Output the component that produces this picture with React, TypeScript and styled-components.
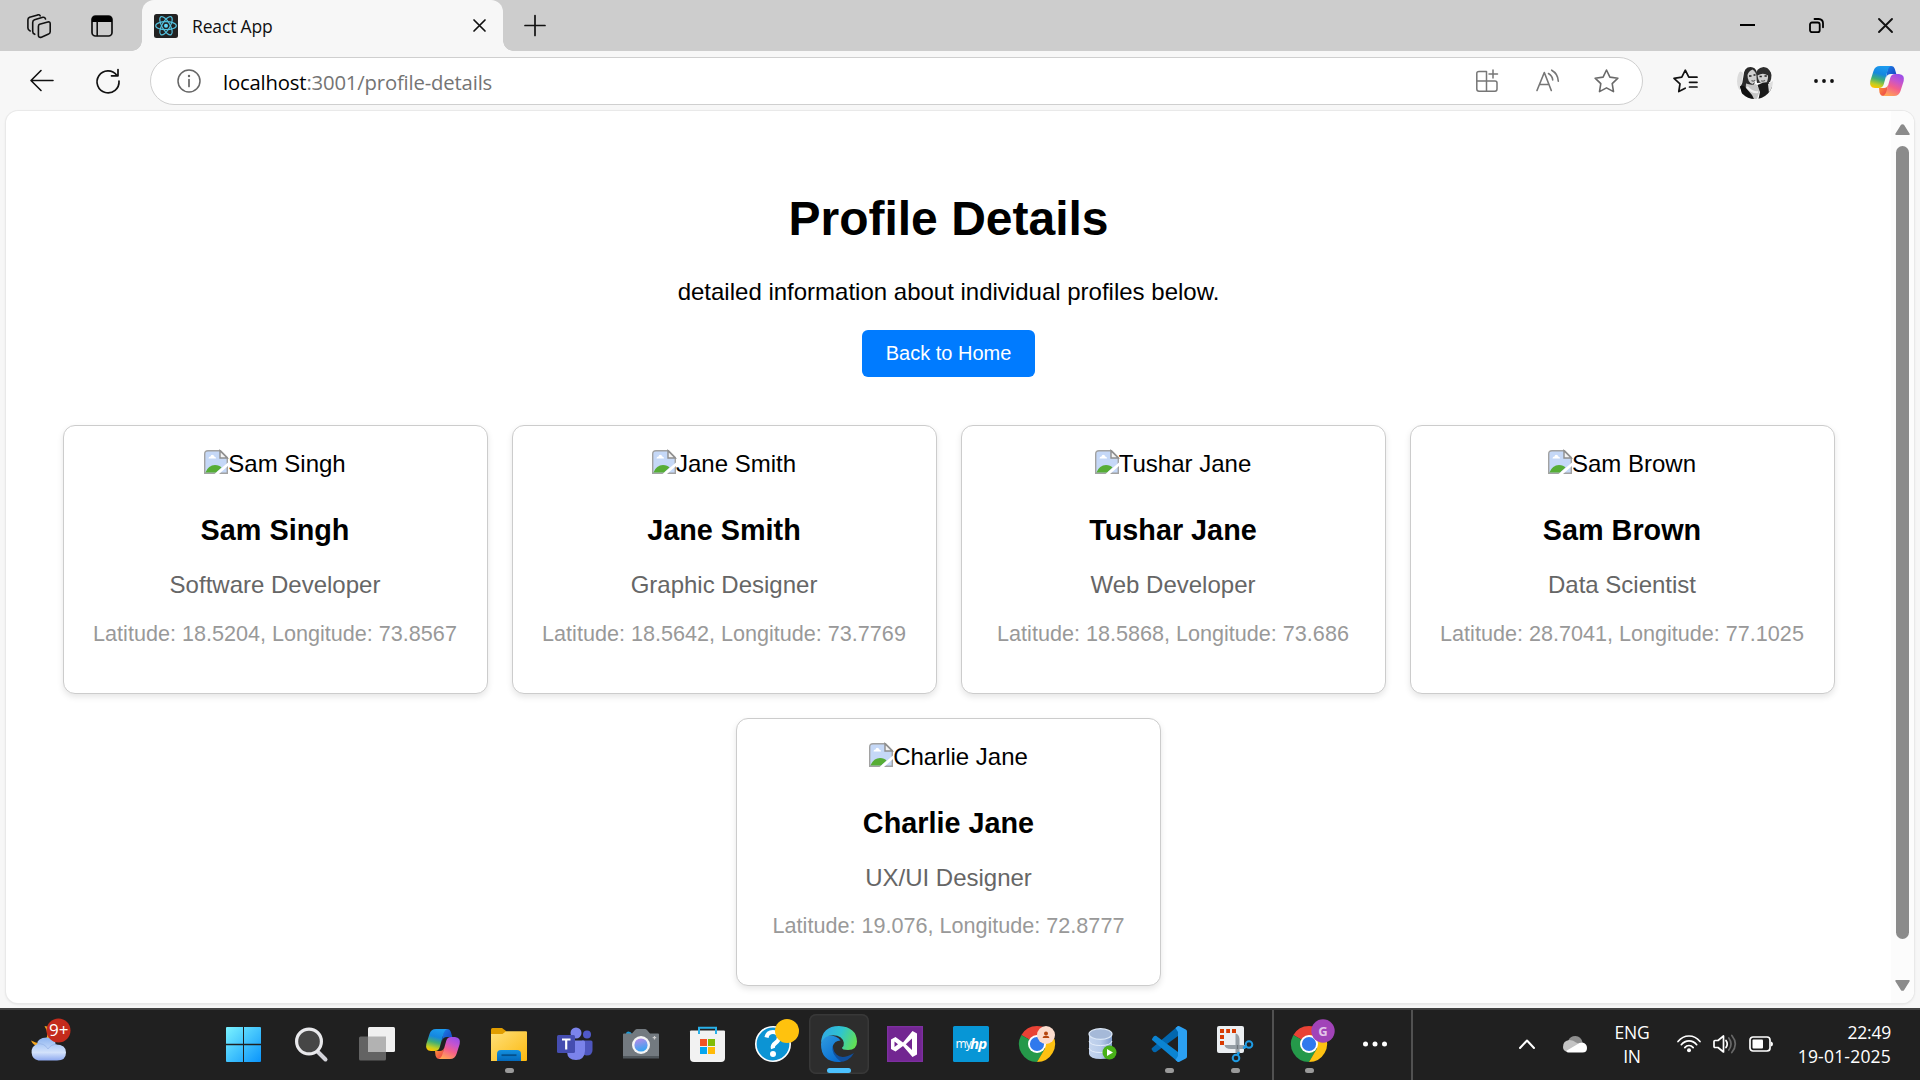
import React from "react";
import styled, { createGlobalStyle, css } from "styled-components";

const uiFont = `"Open Sans", "Noto Sans", sans-serif`;
const pageFont = `"Liberation Sans", Arial, sans-serif`;

const GlobalStyle = createGlobalStyle`
  *, *::before, *::after { box-sizing: border-box; }
  html, body { margin: 0; padding: 0; background: #f7f7f7; }
  body { overflow: hidden; }
  svg { display: block; flex: none; overflow: visible; }
`;

const Desktop = styled.div`
  width: 1920px;
  height: 1080px;
  display: flex;
  flex-direction: column;
  overflow: hidden;
  background: #f7f7f7;
`;

/* ---------- browser chrome ---------- */

const TabStrip = styled.header`
  height: 51px;
  flex: none;
  display: flex;
  align-items: center;
  background: #cdcdcd;
`;

const Slot = styled.span<{ $w: number; $h?: number; $ml?: number }>`
  flex: none;
  display: flex;
  align-items: center;
  justify-content: center;
  width: ${(p) => p.$w}px;
  height: ${(p) => p.$h ?? p.$w}px;
  margin-left: ${(p) => p.$ml ?? 0}px;
`;

const Tab = styled.div`
  position: relative;
  height: 51px;
  width: 361px;
  margin-left: 29px;
  padding-left: 12px;
  display: flex;
  align-items: center;
  background: #f7f7f7;
  border-radius: 12px 12px 0 0;

  &::before,
  &::after {
    content: "";
    position: absolute;
    bottom: 0;
    width: 10px;
    height: 10px;
  }
  &::before {
    left: -10px;
    background: radial-gradient(circle at 0 0, transparent 9.5px, #f7f7f7 10px);
  }
  &::after {
    right: -10px;
    background: radial-gradient(circle at 100% 0, transparent 9.5px, #f7f7f7 10px);
  }
`;

const TabTitle = styled.span`
  width: 281px;
  margin-left: 14px;
  font: 400 17.5px/24px ${uiFont};
  letter-spacing: -0.15px;
  color: #111;
`;

const WindowControls = styled.div`
  margin-left: auto;
  margin-right: 27px;
  display: flex;
  gap: 54px;
  align-items: center;
`;

const Toolbar = styled.nav`
  height: 60px;
  flex: none;
  display: flex;
  align-items: center;
  padding: 0 15px 0 30px;
`;

const AddressBar = styled.div`
  width: 1493px;
  height: 48px;
  margin-left: 30px;
  padding: 0 23px 0 26px;
  display: flex;
  align-items: center;
  background: #fff;
  border: 1.5px solid #cfcfcf;
  border-radius: 24px;
`;

const Url = styled.span`
  margin-left: 22px;
  margin-right: auto;
  padding-top: 1px;
  font: 400 20.3px/28px ${uiFont};
  letter-spacing: -0.17px;
  color: #747474;
  white-space: nowrap;
`;

const Host = styled.span`
  color: #000;
`;

/* ---------- page ---------- */

const Viewport = styled.div`
  height: 891.5px;
  flex: none;
  margin: 0 6px;
  display: flex;
  background: #fff;
  border-radius: 12px;
  box-shadow: 0 0 0 1px #e9e9e9, 0 1px 3px rgba(0, 0, 0, 0.12);
  overflow: hidden;
`;

const Page = styled.main`
  flex: 1;
  padding-top: 79px;
  display: flex;
  flex-direction: column;
  align-items: center;
  font-family: ${pageFont};
  color: #000;
`;

const Heading = styled.h1`
  margin: 0;
  padding-top: 1px;
  font-size: 48px;
  line-height: 55px;
  font-weight: 700;
`;

const Subtitle = styled.p`
  margin: 32px 0 0;
  font-size: 24px;
  line-height: 28px;
`;

const HomeButton = styled.button`
  margin: 24px 0 0;
  width: 173px;
  height: 47px;
  padding: 0;
  border: 0;
  border-radius: 6px;
  background: #007bff;
  color: #fff;
  font: 400 20px/23px ${pageFont};
`;

const CardList = styled.section`
  margin-top: 48px;
  width: 1800px;
  display: flex;
  flex-wrap: wrap;
  justify-content: center;
  gap: 24px;
`;

const Card = styled.article`
  width: 425px;
  height: 268.5px;
  padding-top: 24px;
  display: flex;
  flex-direction: column;
  align-items: center;
  border: 1px solid #ccc;
  border-radius: 12px;
  background: #fff;
  box-shadow: 0 3px 6px rgba(0, 0, 0, 0.1);
`;

const Photo = styled.div`
  height: 28px;
  display: flex;
  align-items: flex-start;
  font-size: 24px;
  line-height: 28px;
`;

const Name = styled.h3`
  margin: 36px 0 0;
  font-size: 28.8px;
  line-height: 32px;
`;

const Role = styled.p`
  margin: 25px 0 0;
  font-size: 24px;
  line-height: 28px;
  color: #666;
`;

const Coordinates = styled.p`
  margin: 22.5px 0 0;
  font-size: 21.6px;
  line-height: 24px;
  color: #999;
`;

const Scrollbar = styled.aside`
  width: 23px;
  padding: 12.5px 0 12px;
  display: flex;
  flex-direction: column;
  align-items: center;
  background: #fcfcfc;
`;

const Thumb = styled.div`
  width: 13px;
  height: 793px;
  margin: 11.5px 0 40.5px;
  border-radius: 7px;
  background: #8b8b8b;
`;

/* ---------- taskbar ---------- */

const Taskbar = styled.footer`
  height: 72px;
  margin-top: auto;
  flex: none;
  display: flex;
  background: #202020;
  border-top: 2px solid #414141;
`;

const Weather = styled.div`
  width: 210px;
  padding: 8px 0 0 30px;
`;

const TaskCell = styled.div<{ $active?: boolean; $running?: boolean }>`
  position: relative;
  width: 60px;
  height: 60px;
  margin: 4px 3px 0;
  flex: none;
  display: flex;
  align-items: center;
  justify-content: center;
  border-radius: 7px;
  ${(p) =>
    p.$active &&
    css`
      background: #2d2d2d;
      box-shadow: inset 0 0 0 1.5px #383838;
    `}
  ${(p) =>
    (p.$active || p.$running) &&
    css`
      &::after {
        content: "";
        position: absolute;
        bottom: 1px;
        width: ${p.$active ? 24 : 9}px;
        height: 5px;
        border-radius: 3px;
        background: ${p.$active ? "#4cc2ff" : "#9a9a9a"};
      }
    `}
`;

const TaskList = styled.div<{ $ml?: number }>`
  display: flex;
  flex: none;
  margin-left: ${(p) => p.$ml ?? 0}px;
`;

const Divider = styled.div<{ $ml: number }>`
  width: 2px;
  flex: none;
  margin-left: ${(p) => p.$ml}px;
  background: #515151;
`;

const Tray = styled.div`
  height: 68px;
  margin-left: auto;
  padding-right: 29px;
  display: flex;
  align-items: center;
`;

const TrayText = styled.div<{ $align: string; $w: number; $ml: number }>`
  width: ${(p) => p.$w}px;
  margin-left: ${(p) => p.$ml}px;
  text-align: ${(p) => p.$align};
  font: 400 17.5px/24px ${uiFont};
  letter-spacing: -0.2px;
  white-space: nowrap;
  color: #fff;
`;

const DateLine = styled.span`
  letter-spacing: 0.2px;
`;

/* ---------- chrome icons ---------- */

const line = {
  fill: "none",
  stroke: "#111",
  strokeWidth: 1.6,
  strokeLinecap: "round" as const,
  strokeLinejoin: "round" as const,
};

const WorkspacesIcon = () => (
  <svg width="24" height="24" viewBox="0 0 24 24" {...line} strokeWidth={1.6}>
    <path d="M12.600 10.200 20.800 8q2.400-.5 2.400 1.800v8q0 1.500-1.600 2.300l-7.200 3.100q-2.800.8-3-1.800v-9q0-1.800 1.200-2.200Z" />
    <path d="M7.800 20.300Q5.700 19.500 5.700 17.500V8.400q0-2 1.800-2.600L15.800 3.300q2-.5 2.700 1.600" />
    <path d="M3.200 17Q.9 16 .9 14V5.700Q.9 4 2.600 3.300L10.700.9q1.800-.4 2.500.9" />
  </svg>
);

const TabActionsIcon = () => (
  <svg width="22" height="22" viewBox="0 0 22 22">
    <rect x="1" y="1" width="20" height="20" rx="3.500" {...line} strokeWidth={1.700} />
    <path d="M1 7V4.500Q1 1 4.500 1h13Q21 1 21 4.500V7Z" fill="#000" />
    <path d="M6.200 7v13.500" {...line} />
  </svg>
);

const ReactIcon = () => (
  <svg width="24" height="24" viewBox="0 0 24 24">
    <rect width="24" height="24" rx="2.500" fill="#222" />
    <g fill="none" stroke="#53c1de" strokeWidth="1.200">
      <ellipse cx="12" cy="11.700" rx="10.300" ry="4" />
      <ellipse cx="12" cy="11.700" rx="10.300" ry="4" transform="rotate(60 12 11.700)" />
      <ellipse cx="12" cy="11.700" rx="10.300" ry="4" transform="rotate(120 12 11.700)" />
    </g>
    <circle cx="12" cy="11.700" r="2" fill="#61dafb" />
  </svg>
);

const CrossIcon = ({ size, w = 1.8 }: { size: number; w?: number }) => (
  <svg width={size} height={size} viewBox={`0 0 ${size} ${size}`} {...line} strokeWidth={w}>
    <path d={`M1 1 ${size - 1} ${size - 1}M${size - 1} 1 1 ${size - 1}`} />
  </svg>
);

const PlusIcon = () => (
  <svg width="22" height="22" viewBox="0 0 22 22" {...line} strokeWidth={1.700}>
    <path d="M11 .5v20M1 10.500h20" />
  </svg>
);

const MinimizeIcon = () => (
  <svg width="15" height="15" viewBox="0 0 15 15">
    <path d="M0 7h15" stroke="#000" strokeWidth="2" />
  </svg>
);

const RestoreIcon = () => (
  <svg width="15" height="15" viewBox="0 0 15 15" {...line} stroke="#000" strokeWidth={1.800}>
    <rect x="1" y="4.500" width="9.700" height="9.700" rx="2" />
    <path d="M5.500 1h4.200q4.300.2 4.300 4.300v4" />
  </svg>
);

const BackIcon = () => (
  <svg width="24" height="22" viewBox="0 0 24 22" {...line}>
    <path d="M23 10.500H1.200M11 .5 1 10.500l10 10" />
  </svg>
);

const RefreshIcon = () => (
  <svg width="24" height="24" viewBox="0 0 24 24" {...line} strokeWidth={1.700}>
    <path d="M20.800 6.200A11 11 0 1 0 23 12M22 .5v6.300h-6.500" />
  </svg>
);

const InfoIcon = () => (
  <svg width="24" height="24" viewBox="0 0 24 24">
    <circle cx="12" cy="12" r="11" {...line} stroke="#666" strokeWidth={1.500} />
    <path d="M12 10.500v7" stroke="#666" strokeWidth="1.700" strokeLinecap="round" />
    <circle cx="12" cy="7" r="1.200" fill="#666" />
  </svg>
);

const AppsIcon = () => (
  <svg width="22" height="22" viewBox="0 0 22 22" {...line} stroke="#767676" strokeWidth={1.500}>
    <path d="M10.500 11V1.500H3Q.8 1.500.8 3.500V19q0 2.200 2.200 2.200h16q2 0 2-2.200v-6q0-2-2-2H.8M10.500 11v10M17 0v8M13 4h8.500" />
  </svg>
);

const ReadAloudIcon = () => (
  <svg width="24" height="22" viewBox="0 0 24 22" {...line} stroke="#767676" strokeWidth={1.600}>
    <path d="M1 20.500 8.300 2.500l7 18M3.500 14.500h9.500" />
    <path d="M12.500 3.500q4 2.500 4.200 6.500M15.700.2q6.300 3.500 6.600 11" />
  </svg>
);

const StarIcon = () => (
  <svg width="25" height="24" viewBox="0 0 25 24" {...line} stroke="#6a6a6a" strokeWidth={1.600}>
    <path d="M12.500 1 15.900 8.100 23.900 9.200 18.200 14.700 19.500 22.600 12.500 18.900 5.500 22.600 6.800 14.700 1.100 9.200 9.100 8.100Z" />
  </svg>
);

const FavoritesIcon = () => (
  <svg width="25" height="24" viewBox="0 0 25 24" {...line} strokeWidth={1.700}>
    <path d="M12.200 19.200 5.800 22.500 7 14.800 1 9.400 8.800 8.200 12.300 1.200 15.800 8.200H24M16.500 13.300H24M16.500 18H24" />
  </svg>
);

const MoreIcon = ({ color, gap, r }: { color: string; gap: number; r: number }) => (
  <svg width="26" height="6" viewBox="0 0 26 6" fill={color}>
    <circle cx={13 - gap} cy="3" r={r} />
    <circle cx="13" cy="3" r={r} />
    <circle cx={13 + gap} cy="3" r={r} />
  </svg>
);

const AvatarIcon = () => (
  <svg width="36" height="36" viewBox="0 0 36 36">
    <defs>
      <clipPath id="avatarClip">
        <circle cx="18" cy="18" r="18" />
      </clipPath>
    </defs>
    <g clipPath="url(#avatarClip)">
      <rect width="36" height="36" fill="#fafafa" />
      <path d="M0 10q4-3 6 0l-2 16-4 2Z" fill="#dcdcdc" />
      <path d="M3 25Q6 20 6.500 13 7 4 13.500 4q5.500 0 6.500 6l-3 12-6 8Z" fill="#2a2a2a" />
      <path d="M19 13q-.500-8 7.500-9Q34 4.500 34.500 12q0 4-1.500 7l-13 1Z" fill="#2e2e2e" />
      <path d="M10.500 12q1-4 5-5.500 3.500 2 4 6.500 0 6-4 8-5-1.500-5-9Z" fill="#cfcfcf" />
      <path d="M20.500 12.500q5.500-3.500 10.500 0 .500 6.500-3.500 8.500-6 0-7-8.500Z" fill="#d0d0d0" />
      <path d="M9 20.500q5 2 10 .5l4 6-3 9H8Z" fill="#c6c6c6" />
      <path d="M20.500 22q5-3 11-3l4 5-5 12h-9l1.500-7Z" fill="#1b1b1b" />
      <path d="M3 23q4-1 6 2l6 7 2 4H6Z" fill="#111" />
      <path d="m31 21 5-3v9l-4 3Z" fill="#dedede" />
      <path d="M12 13h2.500M16.500 12h2M22.500 13.500h2.300M27.500 13h2.300" stroke="#222" strokeWidth="1.500" />
      <path d="M14.500 17.500q2 1.500 3.500-.5M24 17.800q2 1 4-.6" stroke="#666" strokeWidth="1.200" fill="none" />
      <path d="M10 24q5 6 11 5" stroke="#efefef" strokeWidth="2" fill="none" />
    </g>
  </svg>
);

const CopilotIcon = ({ id }: { id: string }) => (
  <svg width="34" height="30" viewBox="0 0 34 30">
    <defs>
      <linearGradient id={`${id}a`} x1="0.55" y1="0" x2="0.3" y2="1">
        <stop offset="0" stopColor="#1c9bef" />
        <stop offset=".35" stopColor="#1587df" />
        <stop offset=".6" stopColor="#3fae78" />
        <stop offset=".85" stopColor="#c2ce22" />
        <stop offset="1" stopColor="#ffc400" />
      </linearGradient>
      <linearGradient id={`${id}b`} x1="0.75" y1="0" x2="0.3" y2="1">
        <stop offset="0" stopColor="#9b4ee8" />
        <stop offset=".3" stopColor="#c454cf" />
        <stop offset=".6" stopColor="#f45f8b" />
        <stop offset="1" stopColor="#ffa455" />
      </linearGradient>
      <linearGradient id={`${id}c`} x1="0" y1="0" x2="1" y2="1">
        <stop offset="0" stopColor="#1d7fe8" />
        <stop offset="1" stopColor="#1740bd" />
      </linearGradient>
      <linearGradient id={`${id}d`} x1="0" y1="0" x2="1" y2="1">
        <stop offset="0" stopColor="#ff9a35" />
        <stop offset="1" stopColor="#e9384f" />
      </linearGradient>
    </defs>
    <path d="M18 0h3q3 0 4 3.400L26.300 8H21q-4 0-5 4Z" fill={`url(#${id}c)`} />
    <path d="M9 22h5q3 0 4-3l-1.500 11h-3q-3 0-4-3.500Z" fill={`url(#${id}d)`} />
    <path d="M10 0H21q-2.500 1-3.500 5l-3.700 13q-1 4-5 4H5Q-1 21.500.3 15L3.500 5Q5 0 10 0Z" fill={`url(#${id}a)`} />
    <path d="M24 30H12.500q3-1 4-5l3.700-13q1-4 5-4H29q6 .5 4.700 7L30.500 25Q29 30 24 30Z" fill={`url(#${id}b)`} />
  </svg>
);

const BrokenImageIcon = () => (
  <svg width="24" height="24" viewBox="0 0 24 24">
    <path d="M4 .7h12.500l6.800 6.800v15.800H.7V4Q.7.700 4 .7Z" fill="#c5d8f7" stroke="#a2a2a2" strokeWidth="1.400" />
    <path d="M4.500 8.500q0-2 2-2 .5-2.300 2.400-1.500Q10.500 5.500 10.500 6.800q1.700.2 1.500 1.700Z" fill="#fff" />
    <path d="M1.400 22.600q3-7.600 9.600-7.600 4.500 0 6.500 2.500l-5.500 5.100Z" fill="#56ad35" />
    <path d="M16 .7v7.300h7.300Z" fill="#f4f4f4" stroke="#8e8e8e" strokeWidth="1.400" />
    <path d="M24 12.500 10.500 24H15l9-8Z" fill="#fff" />
  </svg>
);

const ArrowIcon = ({ down = false }: { down?: boolean }) => (
  <svg width="15" height="11" viewBox="0 0 15 11">
    <path
      d={down ? "M1 .8h13L8.800 9.200q-1.300 1.800-2.600 0Z" : "M1 10.200h13L8.800 1.800q-1.300-1.800-2.600 0Z"}
      fill="#8b8b8b"
      stroke="#8b8b8b"
      strokeWidth="1.500"
      strokeLinejoin="round"
    />
  </svg>
);

/* ---------- taskbar icons ---------- */

const BadgeText = styled.text`
  font: 400 17px ${uiFont};
  fill: #fff;
  text-anchor: middle;
`;

const InitialText = styled.text<{ $size: number; $color: string }>`
  font: 700 ${(p) => p.$size}px ${uiFont};
  fill: ${(p) => p.$color};
  text-anchor: middle;
`;

const LogoText = styled.text<{ $bold?: boolean }>`
  font: ${(p) => (p.$bold ? "italic 700 15px" : "400 12px")} ${uiFont};
  fill: #fff;
  letter-spacing: -0.8px;
`;

const WeatherIcon = () => (
  <svg width="42" height="44" viewBox="0 0 42 44">
    <defs>
      <linearGradient id="cloud" x1="0" y1="0" x2="0" y2="1">
        <stop offset="0" stopColor="#8db4f0" />
        <stop offset=".65" stopColor="#d3e2fb" />
        <stop offset="1" stopColor="#8faaf0" />
      </linearGradient>
    </defs>
    <path d="M14.500 8q5 8 1 14T1 22.500q2 5 8 6h16V14Q20 8 14.500 8Z" fill="#f2a51f" />
    <path d="M8.500 42.500A8.600 8.600 0 0 1 7.200 26q0-6 9.500-6.500 8 .3 9 7 10.300 0 10.300 8t-9 8Z" fill="url(#cloud)" />
    <path d="M7 26q7-1.500 11 5 3-5 9-4.500" fill="none" stroke="#86a6e2" strokeOpacity=".5" />
    <circle cx="28.500" cy="12.500" r="12" fill="#c42b1c" />
    <BadgeText x="28.800" y="18">9+</BadgeText>
  </svg>
);

const WindowsIcon = () => (
  <svg width="35" height="35" viewBox="0 0 35 35">
    <defs>
      <linearGradient id="win" gradientUnits="userSpaceOnUse" x1="0" y1="0" x2="35" y2="35">
        <stop offset="0" stopColor="#7bf3ff" />
        <stop offset="1" stopColor="#0a94fb" />
      </linearGradient>
    </defs>
    <path d="M1 0h16v16.800H0V1Q0 0 1 0ZM18 0h16q1 0 1 1v15.800H18ZM0 18.200h17V35H1q-1 0-1-1ZM18 18.200h17V34q0 1-1 1H18Z" fill="url(#win)" />
  </svg>
);

const SearchIcon = () => (
  <svg width="33" height="35" viewBox="0 0 33 35">
    <path d="m22.500 24.500 8 8" stroke="#d4d4da" strokeWidth="4" strokeLinecap="round" />
    <circle cx="14" cy="14.500" r="12.400" fill="#464646" stroke="#e9e9ec" strokeWidth="3.200" />
  </svg>
);

const TaskViewIcon = () => (
  <svg width="36" height="34" viewBox="0 0 36 34">
    <rect y="9.500" width="27" height="24" rx="1.500" fill="#636363" />
    <rect x="9" width="27" height="25" rx="1.500" fill="#f0f0f0" />
    <path d="M9 9.500h18V25H9Z" fill="#b2b2b2" />
  </svg>
);

const FolderIcon = () => (
  <svg width="36" height="33" viewBox="0 0 36 33">
    <defs>
      <linearGradient id="fold" x1="0" y1="0" x2="1" y2="1">
        <stop offset="0" stopColor="#ffe07a" />
        <stop offset="1" stopColor="#fcb90f" />
      </linearGradient>
      <linearGradient id="foldBlue" x1="0" y1="0" x2="0" y2="1">
        <stop offset="0" stopColor="#1390e0" />
        <stop offset="1" stopColor="#0469bb" />
      </linearGradient>
    </defs>
    <path d="M0 8V1.500Q0 0 1.500 0H11l4 3v5Z" fill="#e19d00" />
    <path d="M0 6h11.500L15 3.200h20q1 0 1 1V32q0 1-1 1H0Z" fill="url(#fold)" />
    <path d="M6 33v-7q0-4 4-4h16q4 0 4 4v7Z" fill="url(#foldBlue)" />
    <path d="M10.500 27.200h15" stroke="#04508c" strokeWidth="1.800" />
  </svg>
);

const TeamsIcon = () => (
  <svg width="36" height="32" viewBox="0 0 36 32">
    <circle cx="30" cy="6.500" r="4" fill="#5059c9" />
    <path d="M25 12.500h9q1.500 0 1.500 1.500v8q0 5.500-6 5.500Q25 27 25 22Z" fill="#4e56be" />
    <circle cx="19" cy="5" r="5.500" fill="#7b83eb" />
    <path d="M11 12.500h15.500q1.500 0 1.500 1.500v9q-.5 9-9 9T10 24Z" fill="#7b83eb" />
    <rect y="7" width="18" height="18" rx="1.500" fill="#454db0" />
    <path d="M5 11.500h8.500M9.200 11.500v10" stroke="#fff" strokeWidth="2.200" />
  </svg>
);

const CameraIcon = () => (
  <svg width="36" height="30" viewBox="0 0 36 30">
    <defs>
      <linearGradient id="lens" x1="0.300" y1="0" x2="0.600" y2="1">
        <stop offset="0" stopColor="#b48be8" />
        <stop offset="1" stopColor="#31a5f2" />
      </linearGradient>
    </defs>
    <path d="M3 5q0-2.500 2.500-2.500T9 5Z" fill="#159ddd" />
    <path d="M1 4.500h8L12 1q1-1 2-1h8q1 0 2 1l3 3.500h8q1 0 1 1V29H0V5.500q0-1 1-1Z" fill="#737a80" />
    <path d="M0 27h36v2.500H0Z" fill="#50575c" />
    <circle cx="18" cy="16" r="9" fill="#f4f4f4" />
    <circle cx="18" cy="16" r="6.600" fill="url(#lens)" />
    <path d="M31.500 7v3.500M29.700 8.700h3.500" stroke="#ccc" strokeWidth="1.200" />
  </svg>
);

const StoreIcon = () => (
  <svg width="35" height="35" viewBox="0 0 35 35">
    <path d="M0 4.500q0-1 1-1h33q1 0 1 1V31q0 4-4 4H4q-4 0-4-4Z" fill="#f2f2f2" />
    <path d="M9 7V.8h17V7" fill="none" stroke="#28b0e8" strokeWidth="2" />
    <path d="M10 12h7v7h-7Z" fill="#f35325" />
    <path d="M18 12h7v7h-7Z" fill="#81bc06" />
    <path d="M10 20h7v7h-7Z" fill="#05a6f0" />
    <path d="M18 20h7v7h-7Z" fill="#ffba08" />
  </svg>
);

const HelpIcon = () => (
  <svg width="36" height="36" viewBox="0 0 36 36">
    <circle cx="18" cy="18" r="17.200" fill="#0c94d4" stroke="#fff" strokeWidth="1.600" />
    <path d="M11.500 11.500Q12.500 6 18 6t6 5.500q0 3-3.500 5.500T18 22.500" fill="none" stroke="#fff" strokeWidth="4.200" />
    <circle cx="18" cy="28" r="3" fill="#fff" />
    <circle cx="32" cy="5" r="12" fill="#ffc20e" />
  </svg>
);

const EdgeIcon = () => (
  <svg width="36" height="36" viewBox="0 0 36 36">
    <defs>
      <linearGradient id="edgeTop" x1="0" y1="0.300" x2="1" y2="0.600">
        <stop offset="0" stopColor="#31a8e6" />
        <stop offset=".5" stopColor="#2fc5cf" />
        <stop offset="1" stopColor="#62e053" />
      </linearGradient>
      <linearGradient id="edgeLeft" x1="0" y1="0" x2="0.700" y2="1">
        <stop offset="0" stopColor="#2f9be0" />
        <stop offset="1" stopColor="#0a6fd2" />
      </linearGradient>
    </defs>
    <path d="M13 15q-3 8 2.500 13.500T33 27q-5 9-15 9Q9 35 8 26q0-8 5-11Z" fill="#10509f" />
    <path d="M0 18Q0 10 8 9.500q8 0 11.500 5-6 0-8 6-1.500 8 8.500 15.400Q0 37 0 18Z" fill="url(#edgeLeft)" />
    <path d="M0 17Q1 0 18 0q17.500 1 18 15.500 0 8.500-9 8.500-6 0-6-2.200 2.200-2 1.800-5Q21.500 9.500 12 9.200 3 9.500 0 17Z" fill="url(#edgeTop)" />
  </svg>
);

const VisualStudioIcon = () => (
  <svg width="36" height="36" viewBox="0 0 36 36">
    <rect x=".7" y=".7" width="34.600" height="34.600" fill="#722691" stroke="#7d2fa0" strokeWidth="1.400" />
    <path d="M4 13.500 8.500 11 16 16.500 25.500 5 30 7.500v21L25.500 31 16 20 8.500 25.500 4 23ZM7.500 15.500v5.500l3.500-2.700ZM25 12.500 18.800 18.200 25 24Z" fill="#fff" fillRule="evenodd" />
  </svg>
);

const MyHpIcon = () => (
  <svg width="36" height="36" viewBox="0 0 36 36">
    <rect width="36" height="36" rx="1.500" fill="#0796d6" />
    <LogoText x="2.500" y="22">my</LogoText>
    <LogoText $bold x="17" y="23">hp</LogoText>
  </svg>
);

const ChromeBody = () => (
  <>
    <path d="M18 18 2.400 9A18 18 0 0 1 33.600 9Z" fill="#e94235" />
    <path d="M18 18 2.400 9A18 18 0 0 0 18 36l8-13Z" fill="#25994a" />
    <path d="M18 9h15.600A18 18 0 0 1 18 36l8-13.500Z" fill="#fdc112" />
    <circle cx="18" cy="18" r="9" fill="#fff" />
    <circle cx="18" cy="18" r="7.100" fill="#3079ed" />
  </>
);

const ChromePersonIcon = () => (
  <svg width="36" height="36" viewBox="0 0 36 36">
    <ChromeBody />
    <circle cx="27" cy="9" r="9" fill="#fbdccd" />
    <circle cx="27" cy="7.500" r="2" fill="#b5460f" />
    <path d="M23.700 12q0-2.200 3.300-2.200t3.300 2.200Z" fill="#b5460f" />
  </svg>
);

const ChromeProfileIcon = () => (
  <svg width="36" height="36" viewBox="0 0 36 36">
    <ChromeBody />
    <circle cx="32" cy="5" r="11.700" fill="#a143b8" />
    <InitialText $size={13} $color="#e3c6ea" x="32" y="9.800">G</InitialText>
  </svg>
);

const DatabaseIcon = () => (
  <svg width="30" height="34" viewBox="0 0 30 34">
    <defs>
      <linearGradient id="db" x1="0" y1="0" x2="1" y2="0">
        <stop offset="0" stopColor="#c5d5ee" />
        <stop offset=".5" stopColor="#b7cbe9" />
        <stop offset="1" stopColor="#7f9bc9" />
      </linearGradient>
    </defs>
    <path d="M1 7v20q1 5 11.500 5T24 27V7Z" fill="url(#db)" />
    <ellipse cx="12.500" cy="7" rx="11.500" ry="5.300" fill="#a5b9d8" stroke="#dce8f7" strokeWidth="1.200" />
    <path d="M1 14q1 4.500 11.500 4.500T24 14M1 21q1 4.500 11.500 4.500T24 21" fill="none" stroke="#e5eefa" strokeWidth="1" />
    <circle cx="21.500" cy="25.500" r="7" fill="#48b118" />
    <path d="m19 22 6 3.500-6 3.500Z" fill="#fff" />
  </svg>
);

const VsCodeIcon = () => (
  <svg width="36" height="36" viewBox="0 0 36 36">
    <path d="M1 24q1.500 3.300 4 2L27 10V0L1 22Q0 23 1 24Z" fill="#0267af" />
    <path d="M5 9.700 27 26v10L.8 13.800q1.700-4.700 4.200-4.100Z" fill="#0b84d2" />
    <path d="M27 0q.7-.3 1.500.2l6.300 3.300Q36 4 36 5.500v25q0 1.500-1.200 2l-6.300 3.300q-.9.400-1.500.2L24.500 34 27 30V6L24.500 2Z" fill="#2ba0f2" />
  </svg>
);

const SnippingIcon = () => (
  <svg width="36" height="36" viewBox="0 0 36 36">
    <rect width="27" height="27" rx="2" fill="#ebeff2" />
    <path d="M3 3h4v4H3ZM9.200 3h3.800v4H9.200ZM15 3h4v4h-4ZM3 9h4v4H3ZM3 15h4v4H3Z" fill="#d83b01" />
    <path d="M18.500 7.500q3.500.5 4 5.500v14h-4ZM7.500 19h20.500v4H14q-6 0-6.500-4Z" fill="#969fa6" />
    <path d="M20.500 19v4" stroke="#6d757b" strokeWidth="1.500" />
    <circle cx="32" cy="18.500" r="3.300" fill="none" stroke="#1e9be3" strokeWidth="2" />
    <circle cx="19" cy="32" r="3.300" fill="none" stroke="#1e9be3" strokeWidth="2" />
    <path d="m26 22 3.500-1.500M20.500 29l1.500-3" stroke="#1e9be3" strokeWidth="2.500" />
  </svg>
);

const ChevronIcon = () => (
  <svg width="16" height="10" viewBox="0 0 16 10" {...line} stroke="#fff" strokeWidth={2}>
    <path d="M1 9 8 1.500 15 9" />
  </svg>
);

const CloudIcon = () => (
  <svg width="24" height="17" viewBox="0 0 24 17">
    <path d="M5 5Q7 0 12.500 0t7 6.500L15 9 5 6Z" fill="#8f8f8f" />
    <path d="M0 11q0-6.500 6.500-7 4 0 6.500 2.500l6 2.500L3 15.500Q0 14 0 11Z" fill="#c4c4c4" />
    <path d="m3 15 11-6.500q2-2 5.500-2Q24 7.500 24 12t-4.500 4.500h-14Q4 16.500 3 15Z" fill="#fff" />
  </svg>
);

const WifiIcon = () => (
  <svg width="24" height="18" viewBox="0 0 24 18" {...line} stroke="#fff" strokeWidth={1.700}>
    <path d="M1 6.500Q5.500 1 12 1t11 5.500M4.300 9.700Q7.500 5.800 12 5.800t7.700 3.900M7.800 12.600Q9.500 10.500 12 10.500t4.200 2.100" />
    <circle cx="12" cy="15.300" r="2" fill="#fff" stroke="none" />
  </svg>
);

const SpeakerIcon = () => (
  <svg width="24" height="20" viewBox="0 0 24 20" {...line} stroke="#fff" strokeWidth={1.700}>
    <path d="M1 7.500q0-1 1-1h3L10.500 2v16L5 13.500H2q-1 0-1-1Z" />
    <path d="M13 6.500q2.500 3.500 0 7" />
    <path d="M15.800 4q4.500 6 0 12M18.800 1.500q7 8.500 0 17" stroke="#686868" />
  </svg>
);

const BatteryIcon = () => (
  <svg width="24" height="16" viewBox="0 0 24 16">
    <rect x="1" y="1" width="20" height="14" rx="3" {...line} stroke="#fff" strokeWidth={1.700} />
    <rect x="3.500" y="3.500" width="10.500" height="9" rx="1" fill="#fff" />
    <path d="M22 5.500q2 .5 2 2.500t-2 2.500Z" fill="#fff" />
  </svg>
);

/* ---------- data ---------- */

const profiles = [
  { name: "Sam Singh", role: "Software Developer", lat: "18.5204", lng: "73.8567" },
  { name: "Jane Smith", role: "Graphic Designer", lat: "18.5642", lng: "73.7769" },
  { name: "Tushar Jane", role: "Web Developer", lat: "18.5868", lng: "73.686" },
  { name: "Sam Brown", role: "Data Scientist", lat: "28.7041", lng: "77.1025" },
  { name: "Charlie Jane", role: "UX/UI Designer", lat: "19.076", lng: "72.8777" },
];

const tasks: { icon: React.ReactNode; active?: boolean; running?: boolean }[] = [
  { icon: <SearchIcon /> },
  { icon: <TaskViewIcon /> },
  { icon: <CopilotIcon id="taskCopilot" /> },
  { icon: <FolderIcon />, running: true },
  { icon: <TeamsIcon /> },
  { icon: <CameraIcon /> },
  { icon: <StoreIcon /> },
  { icon: <HelpIcon /> },
  { icon: <EdgeIcon />, active: true },
  { icon: <VisualStudioIcon /> },
  { icon: <MyHpIcon /> },
  { icon: <ChromePersonIcon /> },
  { icon: <DatabaseIcon /> },
  { icon: <VsCodeIcon />, running: true },
  { icon: <SnippingIcon />, running: true },
];

export default function App() {
  return (
    <Desktop>
      <GlobalStyle />
      <TabStrip>
        <Slot $w={24} $ml={27}><WorkspacesIcon /></Slot>
        <Slot $w={22} $ml={40}><TabActionsIcon /></Slot>
        <Tab>
          <Slot $w={24}><ReactIcon /></Slot>
          <TabTitle>React App</TabTitle>
          <Slot $w={13}><CrossIcon size={13} w={1.7} /></Slot>
        </Tab>
        <Slot $w={22} $ml={21}><PlusIcon /></Slot>
        <WindowControls>
          <Slot $w={15}><MinimizeIcon /></Slot>
          <Slot $w={15}><RestoreIcon /></Slot>
          <Slot $w={15}><CrossIcon size={15} w={1.9} /></Slot>
        </WindowControls>
      </TabStrip>

      <Toolbar>
        <Slot $w={24}><BackIcon /></Slot>
        <Slot $w={24} $ml={42}><RefreshIcon /></Slot>
        <AddressBar>
          <Slot $w={24}><InfoIcon /></Slot>
          <Url><Host>localhost</Host>:3001/profile-details</Url>
          <Slot $w={22}><AppsIcon /></Slot>
          <Slot $w={24} $ml={38}><ReadAloudIcon /></Slot>
          <Slot $w={25} $ml={34}><StarIcon /></Slot>
        </AddressBar>
        <Slot $w={25} $ml={30}><FavoritesIcon /></Slot>
        <Slot $w={36} $ml={39}><AvatarIcon /></Slot>
        <Slot $w={26} $ml={38}><MoreIcon color="#111" gap={8} r={1.9} /></Slot>
        <Slot $w={34} $ml={33}><CopilotIcon id="barCopilot" /></Slot>
      </Toolbar>

      <Viewport>
        <Page>
          <Heading>Profile Details</Heading>
          <Subtitle>detailed information about individual profiles below.</Subtitle>
          <HomeButton>Back to Home</HomeButton>
          <CardList>
            {profiles.map((p) => (
              <Card key={p.name}>
                <Photo>
                  <BrokenImageIcon />
                  {p.name}
                </Photo>
                <Name>{p.name}</Name>
                <Role>{p.role}</Role>
                <Coordinates>{`Latitude: ${p.lat}, Longitude: ${p.lng}`}</Coordinates>
              </Card>
            ))}
          </CardList>
        </Page>
        <Scrollbar>
          <ArrowIcon />
          <Thumb />
          <ArrowIcon down />
        </Scrollbar>
      </Viewport>

      <Taskbar>
        <Weather><WeatherIcon /></Weather>
        <TaskList>
          <TaskCell><WindowsIcon /></TaskCell>
        </TaskList>
        <TaskList $ml={2}>
          {tasks.map((t, i) => (
            <TaskCell key={i} $active={t.active} $running={t.running}>{t.icon}</TaskCell>
          ))}
        </TaskList>
        <Divider $ml={4} />
        <TaskList $ml={2}>
          <TaskCell $running><ChromeProfileIcon /></TaskCell>
          <TaskCell><MoreIcon color="#fff" gap={9.5} r={2.5} /></TaskCell>
        </TaskList>
        <Divider $ml={3} />
        <Tray>
          <Slot $w={16}><ChevronIcon /></Slot>
          <Slot $w={24} $ml={28}><CloudIcon /></Slot>
          <TrayText $align="center" $w={40} $ml={25}>ENG<br />IN</TrayText>
          <Slot $w={24} $ml={25}><WifiIcon /></Slot>
          <Slot $w={24} $ml={12}><SpeakerIcon /></Slot>
          <Slot $w={24} $ml={12}><BatteryIcon /></Slot>
          <TrayText $align="right" $w={100} $ml={18}>22:49<br /><DateLine>19-01-2025</DateLine></TrayText>
        </Tray>
      </Taskbar>
    </Desktop>
  );
}
